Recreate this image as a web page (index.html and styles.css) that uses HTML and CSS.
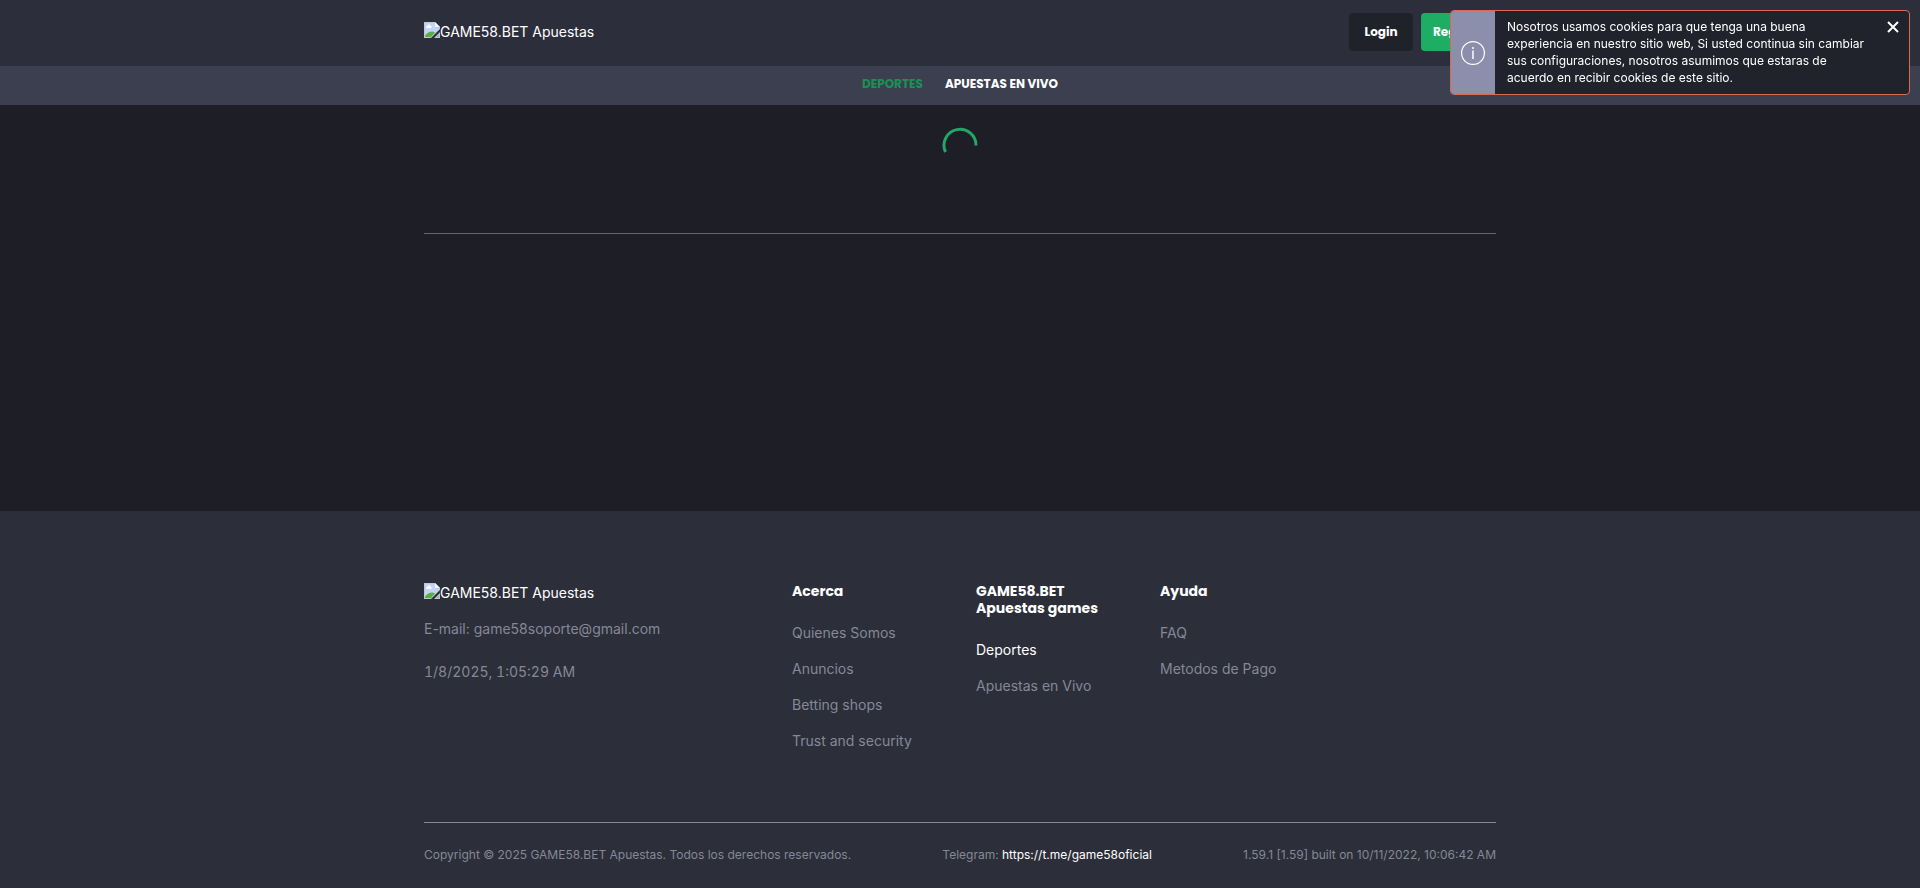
FILE: index.html
```html
<!DOCTYPE html>
<html lang="es">
<head>
<meta charset="utf-8">
<meta name="viewport" content="width=device-width, initial-scale=1">
<title>GAME58.BET Apuestas</title>
<link rel="stylesheet" href="styles.css">
</head>
<body>
<svg class="defs" aria-hidden="true">
  <symbol id="logo-picture" viewBox="0 0 16 16">
    <path d="M0 0h11l5 5v2l-9 9H0z" fill="#c3c7cb"/>
    <path d="M1 1h10v5h4v1l-8 8H1z" fill="#c1d6f7"/>
    <path d="M3 6c-1.500-.2-1.300-2.300.4-2.200.4-1.600 2.600-1.600 3 0 1.700 0 1.700 2.200 0 2.200z" fill="#fff"/>
    <path d="M1 15v-1.500C3 11 5.500 9.500 8 9.500c1.200 0 2.200.4 3 1L7 15z" fill="#57b045"/>
    <path d="M11 0v5h5z" fill="#f4f6f8"/>
    <path d="M16 10v6h-6z" fill="#c3c7cb"/>
    <path d="M15 12.500V15h-2.500z" fill="#8fb98a"/>
  </symbol>
</svg>

<header class="header">
  <div class="container header-row">
    <a class="logo" href="#"><svg class="logo-icon" aria-hidden="true"><use href="#logo-picture"/></svg>GAME58.BET Apuestas</a>
    <div class="actions">
      <button class="button" type="button">Login</button>
      <button class="button button-primary" type="button">Register</button>
    </div>
  </div>
</header>

<nav class="nav">
  <a class="nav-link nav-link-active" href="#">Deportes</a>
  <a class="nav-link" href="#">Apuestas en vivo</a>
</nav>

<main class="main">
  <div class="container">
    <div class="loading">
      <svg class="spinner" viewBox="0 0 36 36" role="img" aria-label="Cargando"><path d="M34 18.500A16 16 0 1 0 3.500 25" fill="none" stroke="#21a766" stroke-width="3"/></svg>
    </div>
  </div>
</main>

<footer class="footer">
  <div class="container">
    <div class="footer-grid">
      <div class="contact">
        <a class="logo" href="#"><svg class="logo-icon" aria-hidden="true"><use href="#logo-picture"/></svg>GAME58.BET Apuestas</a>
        <p class="mail">E-mail: game58soporte@gmail.com</p>
        <p class="clock">1/8/2025, 1:05:29 AM</p>
      </div>
      <section>
        <h2 class="title">Acerca</h2>
        <ul class="links">
          <li><a href="#">Quienes Somos</a></li>
          <li><a href="#">Anuncios</a></li>
          <li><a href="#">Betting shops</a></li>
          <li><a href="#">Trust and security</a></li>
        </ul>
      </section>
      <section>
        <h2 class="title">GAME58.BET Apuestas games</h2>
        <ul class="links">
          <li><a class="current" href="#">Deportes</a></li>
          <li><a href="#">Apuestas en Vivo</a></li>
        </ul>
      </section>
      <section>
        <h2 class="title">Ayuda</h2>
        <ul class="links">
          <li><a href="#">FAQ</a></li>
          <li><a href="#">Metodos de Pago</a></li>
        </ul>
      </section>
    </div>
    <div class="legal">
      <span>Copyright © 2025 GAME58.BET Apuestas. Todos los derechos reservados.</span>
      <span>Telegram: <a href="#">https://t.me/game58oficial</a></span>
      <span>1.59.1 [1.59] built on 10/11/2022, 10:06:42 AM</span>
    </div>
  </div>
</footer>

<aside class="notice" role="status">
  <div class="notice-side">
    <svg class="notice-icon" viewBox="0 0 24 24" aria-hidden="true"><circle cx="12" cy="12" r="11.400" fill="none" stroke="#fff" stroke-width="1.200"/><path d="M12 9.500v8.500" stroke="#fff" stroke-width="1.500"/><circle cx="12" cy="7" r="1" fill="#fff"/></svg>
  </div>
  <p class="notice-text">Nosotros usamos cookies para que tenga una buena experiencia en nuestro sitio web, Si usted continua sin cambiar sus configuraciones, nosotros asumimos que estaras de acuerdo en recibir cookies de este sitio.</p>
  <button class="close" type="button" aria-label="Cerrar"><svg class="close-icon" viewBox="0 0 12 12" aria-hidden="true"><path d="M1 1l10 10M11 1L1 11" stroke="#fff" stroke-width="2"/></svg></button>
</aside>
</body>
</html>
```
FILE: styles.css
```css
* {
  box-sizing: border-box;
}

body {
  margin: 0;
  min-height: 100vh;
  display: flex;
  flex-direction: column;
  background: #1e1e26;
  color: #fff;
  font: 14px/17px Inter, "Liberation Sans", sans-serif;
}

a {
  color: inherit;
  text-decoration: none;
}

p,
ul {
  margin: 0;
  padding: 0;
}

.defs {
  position: absolute;
  width: 0;
  height: 0;
}

.container {
  width: 100%;
  max-width: 1104px;
  margin: 0 auto;
  padding: 0 16px;
}

.header {
  padding: 13px 0 15px;
  background: #2c2f3b;
  box-shadow: 0 0 3px rgba(0, 0, 0, 0.3);
}

.header-row {
  display: flex;
  align-items: center;
  justify-content: space-between;
}

.logo {
  display: flex;
  align-items: flex-end;
}

.header .logo {
  padding-bottom: 2px;
}

.logo-icon {
  width: 16px;
  height: 16px;
  margin-bottom: 2px;
}

.actions {
  display: flex;
  gap: 8px;
}

.button {
  min-width: 64px;
  height: 38px;
  padding: 0 12px 2px;
  border: 0;
  border-radius: 4px;
  background: #20222a;
  color: #fff;
  font: 700 12px/17px Poppins, Inter, sans-serif;
}

.button-primary {
  min-width: 75px;
  background: #1eae63;
}

.nav {
  display: flex;
  justify-content: center;
  gap: 22px;
  padding: 9px 0 13px;
  background: #3c3f4f;
}

.nav-link {
  font: 700 12px/17px Poppins, Inter, sans-serif;
  text-transform: uppercase;
}

.nav-link-active {
  color: #199153;
}

.main {
  flex: 1;
}

.loading {
  display: flex;
  justify-content: center;
  padding: 22px 0 70px;
  border-bottom: 1px solid #65656e;
}

.spinner {
  width: 36px;
  height: 36px;
}

.footer {
  padding: 72px 0 25px;
  background: #2c2e3a;
  color: #858896;
}

.footer-grid {
  display: grid;
  grid-template-columns: 4fr 2fr 2fr 2fr 2fr;
  margin-right: -32px;
  padding-bottom: 73px;
}

.contact .logo {
  color: #fff;
}

.mail {
  margin-top: 19px;
}

.clock {
  margin-top: 26px;
  font-variant-numeric: tabular-nums;
}

.title {
  max-width: 152px;
  margin: 0 0 24px;
  color: #fff;
  font: 700 14px/17px Poppins, Inter, sans-serif;
}

.links {
  display: grid;
  gap: 19px;
  list-style: none;
}

.current,
.legal a {
  color: #fff;
}

.legal {
  display: flex;
  justify-content: space-between;
  padding-top: 23px;
  border-top: 1px solid #858896;
  font-size: 12px;
}

.notice {
  position: fixed;
  top: 10px;
  right: 10px;
  display: flex;
  width: 460px;
  border: 1px solid #d96a4b;
  border-radius: 4px;
  overflow: hidden;
  background: #20232b;
}

.notice-side {
  display: flex;
  flex: 0 0 44px;
  align-items: center;
  justify-content: center;
  background: #8b8fab;
}

.notice-icon {
  width: 24px;
  height: 24px;
}

.notice-text {
  flex: 1;
  padding: 7px 0 8px;
  margin: 0 10px 0 12px;
  font-size: 12px;
}

.close {
  align-self: flex-start;
  display: flex;
  padding: 10px;
  border: 0;
  background: none;
}

.close-icon {
  width: 12px;
  height: 12px;
}
```
